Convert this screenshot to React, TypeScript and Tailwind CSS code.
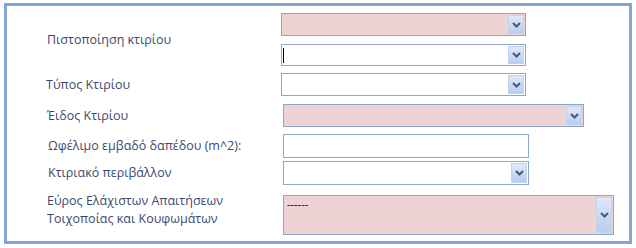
import React from 'react'

function Chevron() {
  return (
    <svg width="9" height="6" viewBox="0 0 9 6" className="block">
      <path d="M1 1 L4.5 4.5 L8 1" fill="none" stroke="#46587c" strokeWidth="2" />
    </svg>
  )
}

function DropButton() {
  return (
    <div className="flex h-full w-[16px] shrink-0 items-center justify-center border border-[#c3d3ee] bg-gradient-to-b from-[#dfe8f8] to-[#b9cdf0]">
      <Chevron />
    </div>
  )
}

function Combo({
  width,
  height = 23,
  pink,
  cursor,
  text,
}: {
  width: number
  height?: number
  pink?: boolean
  cursor?: boolean
  text?: string
}) {
  return (
    <div
      className={`flex border border-[#8ea6c9] ${pink ? 'bg-[#edd3d3]' : 'bg-white'}`}
      style={{ width, height }}
    >
      <div className="relative flex-1">
        {cursor && <span className="absolute left-[1px] top-[3px] h-[15px] w-[1px] bg-black" />}
        {text && (
          <span className="absolute left-[3px] top-[1px] text-[11px] leading-[14px] text-black">{text}</span>
        )}
      </div>
      <div className="py-[1px] pr-[1px]">
        <DropButton />
      </div>
    </div>
  )
}

function TextBox({ width, height = 24 }: { width: number; height?: number }) {
  return <div className="border border-[#8ea6c9] bg-white" style={{ width, height }} />
}

function Label({ children, className }: { children: React.ReactNode; className?: string }) {
  return <div className={`w-[234px] shrink-0 text-[12.5px] leading-[18px] text-[#3b4a6b] ${className ?? ''}`}>{children}</div>
}

export default function App() {
  return (
    <div className="h-[248px] w-[636px] bg-white pl-[4px] pt-[3px]" style={{ fontFamily: '"Open Sans", "Noto Sans", sans-serif' }}>
      <div className="h-[241px] w-[628px] border-[3px] border-[#82a4d6] pl-[40px] pt-[7px]">
        {/* Πιστοποίηση */}
        <div className="flex items-center">
          <Label>Πιστοποίηση κτιρίου</Label>
          <div className="flex flex-col gap-[8px]">
            <Combo width={245} pink />
            <Combo width={245} height={22} cursor />
          </div>
        </div>

        <div className="mt-[7px] flex items-center">
          <Label className="-ml-[1px] pr-[-1px]">Τύπος Κτιρίου</Label>
          <div className="ml-[1px]">
            <Combo width={245} />
          </div>
        </div>

        <div className="mt-[8px] flex items-center">
          <Label>Έιδος Κτιρίου</Label>
          <div className="ml-[2px]">
            <Combo width={301} pink />
          </div>
        </div>

        <div className="mt-[7px] flex items-center">
          <Label className="ml-[1px]">Ωφέλιμο εμβαδό δαπέδου (m^2):</Label>
          <div className="ml-[1px]">
            <TextBox width={246} />
          </div>
        </div>

        <div className="mt-[3px] flex items-center">
          <Label className="ml-[1px]">Κτιριακό περιβάλλον</Label>
          <div className="ml-[1px]">
            <Combo width={246} height={24} />
          </div>
        </div>

        <div className="mt-[10px] flex items-start">
          <Label className="pt-[-2px]">
            <div className="-mt-[3px]">
              Εύρος Ελάχιστων Απαιτήσεων
              <br />
              Τοιχοποίας και Κουφωμάτων
            </div>
          </Label>
          <div className="ml-[2px]">
            <Combo width={331} height={40} pink text="------" />
          </div>
        </div>
      </div>
    </div>
  )
}
